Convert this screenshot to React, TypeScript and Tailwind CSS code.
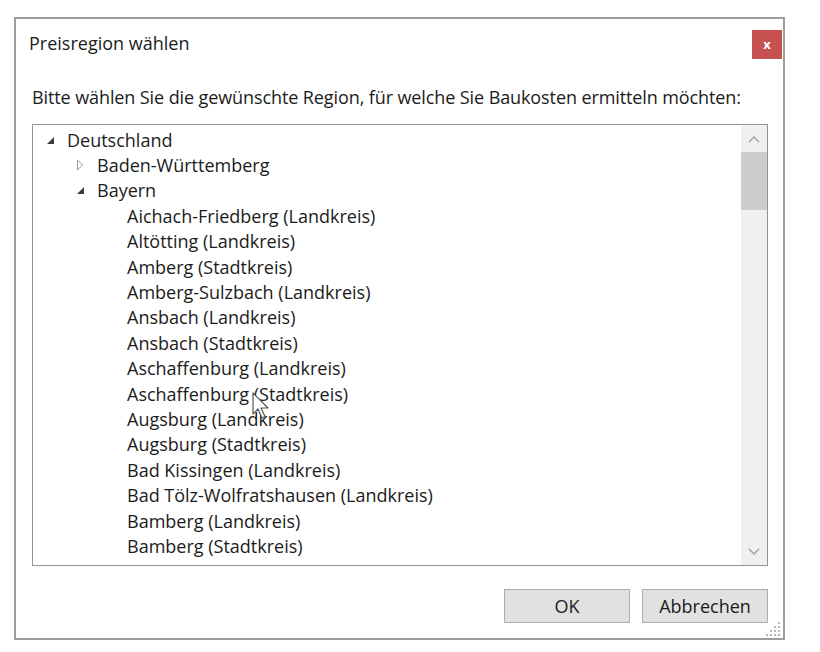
import React from 'react';

type Row = { label: string; level: 0 | 1 | 2; state?: 'open' | 'closed' };

const ROWS: Row[] = [
  { label: 'Deutschland', level: 0, state: 'open' },
  { label: 'Baden-Württemberg', level: 1, state: 'closed' },
  { label: 'Bayern', level: 1, state: 'open' },
  { label: 'Aichach-Friedberg (Landkreis)', level: 2 },
  { label: 'Altötting (Landkreis)', level: 2 },
  { label: 'Amberg (Stadtkreis)', level: 2 },
  { label: 'Amberg-Sulzbach (Landkreis)', level: 2 },
  { label: 'Ansbach (Landkreis)', level: 2 },
  { label: 'Ansbach (Stadtkreis)', level: 2 },
  { label: 'Aschaffenburg (Landkreis)', level: 2 },
  { label: 'Aschaffenburg (Stadtkreis)', level: 2 },
  { label: 'Augsburg (Landkreis)', level: 2 },
  { label: 'Augsburg (Stadtkreis)', level: 2 },
  { label: 'Bad Kissingen (Landkreis)', level: 2 },
  { label: 'Bad Tölz-Wolfratshausen (Landkreis)', level: 2 },
  { label: 'Bamberg (Landkreis)', level: 2 },
  { label: 'Bamberg (Stadtkreis)', level: 2 },
];

const INDENT = ['pl-0', 'pl-[30px]', 'pl-[60px]'];

function Expander({ state }: { state?: 'open' | 'closed' }) {
  if (state === 'open') {
    return (
      <svg width="9" height="9" viewBox="0 0 9 9" className="mt-[1px]">
        <path d="M8 1 L8 8 L1 8 Z" fill="#3b3b3b" />
      </svg>
    );
  }
  if (state === 'closed') {
    return (
      <svg width="8" height="12" viewBox="0 0 8 12">
        <path d="M1.5 1 L6.5 6 L1.5 11 Z" fill="none" stroke="#9a9a9a" strokeWidth="1" />
      </svg>
    );
  }
  return null;
}

function ResizeGrip() {
  const dots: [number, number][] = [];
  for (let r = 0; r < 4; r++) {
    for (let c = 0; c < 4; c++) {
      if (r + c >= 3) dots.push([c * 4 + 1, r * 4 + 1]);
    }
  }
  return (
    <svg width="16" height="16" viewBox="0 0 16 16">
      {dots.map(([x, y], i) => (
        <rect key={i} x={x} y={y} width="2" height="2" fill="#b8b8b8" />
      ))}
    </svg>
  );
}

export default function App() {
  return (
    <div className="w-[820px] h-[652px] bg-white relative overflow-hidden text-[#1b1b1b] font-['Segoe_UI','Open_Sans',sans-serif]">
      <div className="ml-[14px] mt-[17px] w-[771px] h-[623px] border-2 border-[#9d9d9d] bg-white flex flex-col relative">
        {/* Title bar */}
        <div className="flex items-start justify-between pt-[11px]">
          <div className="pl-[13px] pt-[1px] text-[18px] leading-[24px]">Preisregion wählen</div>
          <button className="w-[30px] h-[29px] mr-[1px] bg-[#c75050] text-white text-[13px] font-bold leading-none flex items-center justify-center">
            x
          </button>
        </div>

        {/* Prompt */}
        <div className="pl-[16px] mt-[26px] text-[18px] leading-[24px] tracking-[-0.1px]">
          Bitte wählen Sie die gewünschte Region, für welche Sie Baukosten ermitteln möchten:
        </div>

        {/* Tree */}
        <div className="ml-[16px] mt-[15px] w-[736px] h-[442px] border border-[#8f949c] flex bg-white">
          <div className="flex-1 pt-[2px] overflow-hidden">
            {ROWS.map((row, i) => (
              <div key={i} className={`h-[25.4px] flex items-center ${INDENT[row.level]}`}>
                <div className="w-[34px] h-full flex items-center pl-[13px]">
                  <Expander state={row.state} />
                </div>
                <span className="text-[18px] leading-[24px] whitespace-nowrap">{row.label}</span>
              </div>
            ))}
          </div>
          <div className="w-[26px] bg-[#f0f0f0] flex flex-col">
            <div className="h-[27px] flex items-center justify-center">
              <svg width="12" height="8" viewBox="0 0 12 8">
                <path d="M1 7 L6 2 L11 7" fill="none" stroke="#a3a3a3" strokeWidth="1.5" />
              </svg>
            </div>
            <div className="h-[58px] bg-[#cdcdcd]" />
            <div className="flex-1" />
            <div className="h-[27px] flex items-center justify-center">
              <svg width="12" height="8" viewBox="0 0 12 8">
                <path d="M1 1 L6 6 L11 1" fill="none" stroke="#a3a3a3" strokeWidth="1.5" />
              </svg>
            </div>
          </div>
        </div>

        {/* Buttons */}
        <div className="mt-[23px] flex justify-end gap-[12px] pr-[15px]">
          <button className="w-[126px] h-[34px] bg-[#e1e1e1] border border-[#adadad] text-[18px] leading-none">OK</button>
          <button className="w-[126px] h-[34px] bg-[#e1e1e1] border border-[#adadad] text-[18px] leading-none">Abbrechen</button>
        </div>

        <div className="absolute right-[2px] bottom-[1px]">
          <ResizeGrip />
        </div>
      </div>

      {/* Mouse pointer */}
      <svg className="absolute left-[252px] top-[392px]" width="20" height="28" viewBox="0 0 20 28">
        <path
          d="M1 1 L1 22 L6 17 L10 26 L13 24.5 L9 16 L16 16 Z"
          fill="white"
          stroke="#555"
          strokeWidth="1.2"
          strokeLinejoin="round"
        />
      </svg>
    </div>
  );
}
